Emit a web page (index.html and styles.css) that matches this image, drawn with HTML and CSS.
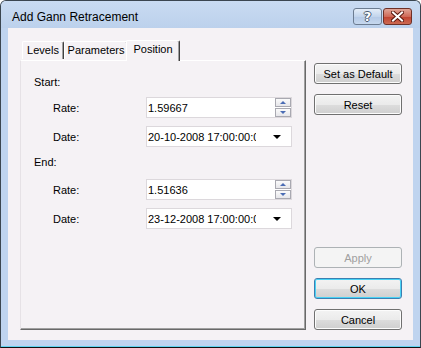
FILE: index.html
```html
<!DOCTYPE html>
<html lang="en">
<head>
    <meta charset="UTF-8">
    <title>Add Gann Retracement</title>
    <link rel="stylesheet" href="styles.css">
</head>
<body>
    <div class="window">
        <div class="titlebar">
            <span class="title">Add Gann Retracement</span>
            <div class="caption-btns">
                <div class="cap-btn help">?</div>
                <div class="cap-btn close">
                    <svg width="13" height="11" viewBox="0 0 13 11">
                        <path d="M2 1.5 L11 9.5 M11 1.5 L2 9.5" stroke="#5a1a10" stroke-width="4" stroke-linecap="square"/>
                        <path d="M2 1.5 L11 9.5 M11 1.5 L2 9.5" stroke="#fff" stroke-width="2" stroke-linecap="square"/>
                    </svg>
                </div>
            </div>
        </div>

        <div class="client">
            <div class="tabs">
                <div class="tab-strip">
                    <div class="tab tab-levels">Levels</div>
                    <div class="tab tab-params">Parameters</div>
                    <div class="tab tab-pos active">Position</div>
                </div>
                <div class="tab-panel">
                    <div class="group-label first">Start:</div>
                    <div class="field">
                        <label>Rate:</label>
                        <div class="box">
                            <span class="value">1.59667</span>
                            <div class="spin">
                                <div class="spin-btn"><span class="arrow-up"></span></div>
                                <div class="spin-btn"><span class="arrow-down"></span></div>
                            </div>
                        </div>
                    </div>
                    <div class="field date">
                        <label>Date:</label>
                        <div class="box">
                            <span class="value clip">20-10-2008 17:00:00:00</span>
                            <span class="drop"></span>
                        </div>
                    </div>

                    <div class="group-label">End:</div>
                    <div class="field rate2">
                        <label>Rate:</label>
                        <div class="box">
                            <span class="value">1.51636</span>
                            <div class="spin">
                                <div class="spin-btn"><span class="arrow-up"></span></div>
                                <div class="spin-btn"><span class="arrow-down"></span></div>
                            </div>
                        </div>
                    </div>
                    <div class="field date">
                        <label>Date:</label>
                        <div class="box">
                            <span class="value clip">23-12-2008 17:00:00:00</span>
                            <span class="drop"></span>
                        </div>
                    </div>
                </div>
            </div>

            <div class="buttons">
                <button class="btn">Set as Default</button>
                <button class="btn">Reset</button>
                <button class="btn disabled push">Apply</button>
                <button class="btn default">OK</button>
                <button class="btn">Cancel</button>
            </div>
        </div>
    </div>
</body>
</html>
```

FILE: styles.css
```css
* {
    box-sizing: border-box;
    margin: 0;
    padding: 0;
}

body {
    font-family: "Liberation Sans", Arial, sans-serif;
    font-size: 11px;
    color: #000;
    background: #fff;
}

.window {
    width: 421px;
    height: 348px;
    border: 1px solid #3b4650;
    border-radius: 6px 6px 0 0;
    background: #bfd4ef;
    border-bottom-color: #111;
    box-shadow: inset 0 -1px 0 #5fd3ef;
    overflow: hidden;
}

.titlebar {
    height: 27px;
    display: flex;
    padding: 0 8px 0 11px;
    background: linear-gradient(#c9dbf2, #bcd1ec);
}

.title {
    font-size: 12px;
    line-height: 14px;
    margin-top: 9px;
    color: #000;
}

.caption-btns {
    margin-left: auto;
    margin-top: 7px;
    display: flex;
    gap: 1px;
}

.cap-btn {
    width: 29px;
    height: 17px;
    border: 1px solid #6c7c91;
    border-radius: 3px;
    display: flex;
    align-items: center;
    justify-content: center;
}

.help {
    background: linear-gradient(#e4edf8, #c3d5ec 50%, #b4c9e6 51%, #c6d8ee);
    color: #fff;
    font-family: "DejaVu Sans", sans-serif;
    font-weight: bold;
    font-size: 13px;
    text-shadow: 1px 0 0 #4a5a70, -1px 0 0 #4a5a70, 0 1px 0 #4a5a70, 0 -1px 0 #4a5a70;
}

.close {
    border-color: #6e3026;
    background: linear-gradient(#e0a597, #d06a58 50%, #c0412f 51%, #cc6a52);
}

.client {
    height: 312px;
    margin: 0 7px;
    background: #f5f2f5;
    display: flex;
    padding: 12px 11px 10px 12px;
    gap: 8px;
}

.tabs {
    width: 286px;
    display: flex;
    flex-direction: column;
}

.tab-strip {
    height: 20px;
    display: flex;
    align-items: flex-end;
    padding-left: 2px;
    position: relative;
    z-index: 1;
}

.tab {
    height: 18px;
    line-height: 16px;
    text-align: center;
    border-top: 1px solid #fff;
    border-left: 1px solid #fff;
    border-right: 1px solid #404040;
    box-shadow: inset -1px 0 0 #a0a0a0;
    border-radius: 2px 2px 0 0;
    background: #f5f2f5;
    margin-bottom: 1px;
}

.tab-levels {
    width: 42px;
}

.tab-params {
    width: 64px;
}

.tab.active {
    width: 54px;
    height: 21px;
    line-height: 17px;
    margin: 0 0 -1px -2px;
}

.tab-panel {
    height: 270px;
    border-top: 1px solid #fff;
    border-left: 1px solid #e6e2e6;
    border-right: 1px solid #696969;
    border-bottom: 1px solid #696969;
    box-shadow: inset -1px -1px 0 #a0a0a0;
    padding-top: 13px;
}

.group-label {
    height: 16px;
    line-height: 16px;
    margin: 7px 0 0 13px;
}

.group-label.first {
    margin-top: 0;
}

.field {
    display: flex;
    align-items: center;
    height: 21px;
    margin-top: 7px;
}

.field.date {
    margin-top: 8px;
}

.field.rate2 {
    margin-top: 9px;
}

.field label {
    width: 93px;
    margin-left: 32px;
}

.box {
    width: 146px;
    height: 21px;
    background: #fff;
    border: 1px solid #dcd8dc;
    display: flex;
    align-items: center;
    position: relative;
    padding-left: 1px;
}

.value {
    line-height: 14px;
}

.value.clip {
    width: 108px;
    overflow: hidden;
    white-space: nowrap;
}

.spin {
    position: absolute;
    right: 0;
    top: 0;
    width: 16px;
    height: 19px;
    display: flex;
    flex-direction: column;
    gap: 1px;
}

.spin-btn {
    flex: 1;
    border: 1px solid #a9a9b1;
    background: linear-gradient(#fbfbfb, #e6e6ea);
    display: flex;
    align-items: center;
    justify-content: center;
}

.arrow-up,
.arrow-down {
    width: 0;
    height: 0;
    border-left: 3px solid transparent;
    border-right: 3px solid transparent;
}

.arrow-up {
    border-bottom: 3px solid #4a6cb4;
}

.arrow-down {
    border-top: 3px solid #4a6cb4;
}

.drop {
    width: 0;
    height: 0;
    margin-left: 17px;
    border-left: 4px solid transparent;
    border-right: 4px solid transparent;
    border-top: 4px solid #000;
}

.buttons {
    width: 88px;
    display: flex;
    flex-direction: column;
    gap: 10px;
    padding-top: 23px;
}

.btn {
    height: 21px;
    font-family: "Liberation Sans", Arial, sans-serif;
    font-size: 11px;
    color: #000;
    border: 1px solid #707070;
    border-radius: 3px;
    background: linear-gradient(#f3f3f3, #ebebeb 50%, #dddddd 51%, #cfcfcf);
    box-shadow: inset 0 0 0 1px #fcfcfc;
}

.btn.push {
    margin-top: auto;
}

.btn.disabled {
    color: #a0a0a0;
    border-color: #adb2b5;
    background: #f4f4f4;
    box-shadow: none;
}

.btn.default {
    border-color: #3c7fb1;
    box-shadow: inset 0 0 0 1px #48d2f5;
}
```
